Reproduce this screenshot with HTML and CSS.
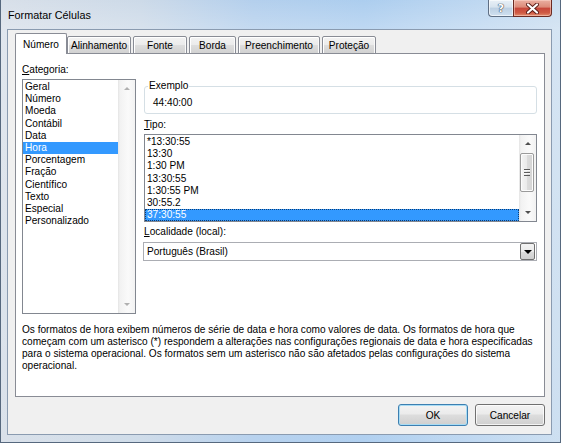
FILE: index.html
```html
<!DOCTYPE html>
<html lang="pt-BR">
<head>
<meta charset="utf-8">
<title>Formatar Células</title>
<link rel="stylesheet" href="styles.css">
</head>
<body>
<div class="window">
  <div class="titlebar">
    <span class="title">Formatar Células</span>
    <div class="caption-buttons">
      <span class="cap-btn cap-help">?</span>
      <span class="cap-btn cap-close">
        <svg width="13" height="11" viewBox="0 0 13 11"><path d="M2 1.5 L11 9.5 M11 1.5 L2 9.5" stroke="#5a1c16" stroke-width="4" stroke-linecap="round"/><path d="M2 1.5 L11 9.5 M11 1.5 L2 9.5" stroke="#ffffff" stroke-width="2.2" stroke-linecap="round"/></svg>
      </span>
    </div>
  </div>
  <div class="client">
    <div class="tabs">
      <span class="tab tab-active tab-numero">Número</span>
      <span class="tab tab-alinhamento">Alinhamento</span>
      <span class="tab tab-fonte">Fonte</span>
      <span class="tab tab-borda">Borda</span>
      <span class="tab tab-preenchimento">Preenchimento</span>
      <span class="tab tab-protecao">Proteção</span>
    </div>
    <div class="panel">
      <div class="cols">
        <div class="col-left">
          <div class="label"><u>C</u>ategoria:</div>
          <div class="listbox cat-list">
            <ul class="items">
              <li>Geral</li>
              <li>Número</li>
              <li>Moeda</li>
              <li>Contábil</li>
              <li>Data</li>
              <li class="selected">Hora</li>
              <li>Porcentagem</li>
              <li>Fração</li>
              <li>Científico</li>
              <li>Texto</li>
              <li>Especial</li>
              <li>Personalizado</li>
            </ul>
            <div class="scrollbar sb-disabled">
              <span class="sb-arrow sb-up"></span>
              <span class="sb-track"></span>
              <span class="sb-arrow sb-down"></span>
            </div>
          </div>
        </div>
        <div class="col-right">
          <fieldset class="group">
            <legend>Exemplo</legend>
            <div class="sample">44:40:00</div>
          </fieldset>
          <div class="label label-tipo"><u>T</u>ipo:</div>
          <div class="listbox type-list">
            <ul class="items">
              <li>*13:30:55</li>
              <li>13:30</li>
              <li>1:30 PM</li>
              <li>13:30:55</li>
              <li>1:30:55 PM</li>
              <li>30:55.2</li>
              <li class="selected focused">37:30:55</li>
            </ul>
            <div class="scrollbar">
              <span class="sb-arrow sb-up"></span>
              <span class="sb-thumb"><span class="sb-grip"></span></span>
              <span class="sb-track"></span>
              <span class="sb-arrow sb-down"></span>
            </div>
          </div>
          <div class="label label-local"><u>L</u>ocalidade (local):</div>
          <div class="combo">
            <span class="combo-text">Português (Brasil)</span>
            <span class="combo-btn"></span>
          </div>
        </div>
      </div>
      <p class="desc">Os formatos de hora exibem números de série de data e hora como valores de data. Os formatos de hora que<br>começam com um asterisco (*) respondem a alterações nas configurações regionais de data e hora especificadas<br>para o sistema operacional. Os formatos sem um asterisco não são afetados pelas configurações do sistema<br>operacional.</p>
    </div>
    <div class="buttons">
      <button class="btn btn-default">OK</button>
      <button class="btn">Cancelar</button>
    </div>
  </div>
</div>
</body>
</html>
```

FILE: styles.css
```css
* { box-sizing: border-box; }
html, body { margin: 0; padding: 0; }
body {
  width: 561px;
  height: 443px;
  overflow: hidden;
  background: #fff;
  font-family: "Liberation Sans", "Open Sans", sans-serif;
  font-size: 10.1px;
  color: #000;
}

.window {
  width: 561px;
  height: 443px;
  display: flex;
  flex-direction: column;
  padding: 0 8px 7px 6px;
  border: 1px solid #56687e;
  border-top: none;
  background:
    linear-gradient(to bottom, rgba(255,255,255,0.05), rgba(255,255,255,0.25) 28px, rgba(255,255,255,0.1)),
    linear-gradient(to right, #d6dee8 0%, #cad8e7 25%, #b0cdec 45%, #a8cbee 65%, #bad5f0 85%, #c8dcef 100%);
}

.titlebar {
  height: 29px;
  flex: none;
  display: flex;
  align-items: flex-start;
}
.title {
  padding: 8px 0 0 1px;
  font-size: 10.8px;
  line-height: 14px;
  color: #000;
}
.caption-buttons {
  margin-left: auto;
  display: flex;
}
.cap-btn {
  height: 17px;
  display: flex;
  align-items: center;
  justify-content: center;
  border: 1px solid #5f6f84;
  border-top: none;
}
.cap-help {
  width: 25px;
  border-right: none;
  border-radius: 0 0 0 4px;
  background: linear-gradient(#e9f0f7, #d7e3ee 45%, #bccfe2 50%, #cfe0f0);
  box-shadow: inset 0 0 0 1px rgba(255,255,255,0.6);
  color: #fff;
  font-family: "DejaVu Sans", sans-serif;
  font-weight: bold;
  font-size: 11px;
  text-shadow: 0 0 1px #3d4a5a, 0 0 1px #3d4a5a, 0 0 1px #3d4a5a;
}
.cap-close {
  width: 39px;
  border-color: #6b2a22;
  border-radius: 0 0 4px 0;
  background: linear-gradient(#eab0a2, #dc8a78 45%, #c7473a 50%, #cf5a44 80%, #e38e6e);
  box-shadow: inset 0 0 0 1px rgba(255,220,210,0.5);
}

.client {
  flex: 1;
  display: flex;
  flex-direction: column;
  border: 1px solid #8a9bb0;
  background: #f0f0f0;
  padding: 3px 6px 8px 7px;
}

.tabs {
  display: flex;
  align-items: flex-end;
  height: 21px;
  margin-bottom: -1px;
  position: relative;
  z-index: 1;
}
.tab {
  height: 18px;
  display: flex;
  align-items: center;
  justify-content: center;
  padding-top: 1px;
  margin-left: 2px;
  border: 1px solid #898c95;
  border-radius: 2px 2px 0 0;
  background: linear-gradient(#f3f3f3, #ebebeb 50%, #dedede 50%, #d2d2d2);
  box-shadow: inset 1px 1px 0 #fff, inset -1px 0 0 #fafafa;
  white-space: nowrap;
}
.tab-active {
  height: 21px;
  margin-left: 0;
  padding-top: 0;
  border-bottom: none;
  background: #fff;
  box-shadow: none;
}
.tab-numero { width: 52px; }
.tab-alinhamento { width: 64px; margin-left: 0; }
.tab-fonte { width: 54px; }
.tab-borda { width: 47px; }
.tab-preenchimento { width: 82px; }
.tab-protecao { width: 54px; }

.panel {
  height: 344px;
  flex: none;
  display: flex;
  flex-direction: column;
  border: 1px solid #898c95;
  background: #fff;
  padding: 10px 7px 0 6px;
}
.cols {
  display: grid;
  grid-template-columns: 114px 1fr;
  column-gap: 8px;
}
.col-right {
  display: flex;
  flex-direction: column;
}
.label {
  line-height: 12px;
  height: 12px;
  white-space: nowrap;
}

.listbox {
  display: flex;
  border: 1px solid #828790;
  background: #fff;
}
.cat-list {
  height: 235px;
  margin-top: 3px;
}
.type-list {
  height: 88px;
  margin-top: 3px;
}
.items {
  list-style: none;
  margin: 0;
  padding: 1px 0 0;
  flex: 1;
  min-width: 0;
}
.items li {
  height: 12.2px;
  line-height: 12.2px;
  padding-left: 2px;
  white-space: nowrap;
}
.items li.selected {
  background: #3399ff;
  color: #fff;
}
.items li.focused {
  outline: 1px dotted #0b3d74;
  outline-offset: -1px;
}

.scrollbar {
  width: 17px;
  flex: none;
  display: flex;
  flex-direction: column;
  background: linear-gradient(to right, #e4e4e4, #f2f2f2 2px, #fafafa 60%, #f2f2f2);
}
.sb-arrow {
  height: 17px;
  flex: none;
  display: flex;
  align-items: center;
  justify-content: center;
}
.sb-arrow::before {
  content: "";
  border-left: 3px solid transparent;
  border-right: 3px solid transparent;
}
.sb-up::before { border-bottom: 3px solid #4f4f4f; }
.sb-down::before { border-top: 3px solid #4f4f4f; }
.sb-disabled .sb-up::before { border-bottom-color: #b0b0b0; }
.sb-disabled .sb-down::before { border-top-color: #b0b0b0; }
.sb-track { flex: 1; }
.sb-thumb {
  height: 39px;
  margin: 1px 2px 0 1px;
  flex: none;
  display: flex;
  align-items: center;
  justify-content: center;
  border: 1px solid #9b9b9b;
  border-radius: 2px;
  background: linear-gradient(to right, #f4f4f4, #eaeaea 50%, #dcdcdc 50%, #d4d4d4);
  box-shadow: inset 0 0 0 1px #fcfcfc;
}
.sb-grip {
  width: 6px;
  height: 7px;
  background: repeating-linear-gradient(to bottom, #5a5a5a 0 1px, #f8f8f8 1px 2px, transparent 2px 3px);
}

.group {
  margin: 16px 0 0;
  padding: 0 0 4px 3px;
  border: 1px solid #d5dfe5;
  border-radius: 3px;
  min-width: 0;
}
.group legend {
  padding: 0 1px;
  line-height: 12px;
}
.sample {
  margin-top: 5px;
  padding-left: 5px;
  line-height: 12px;
}
.label-tipo { margin-top: 5px; }
.label-local { margin-top: 4px; }

.combo {
  height: 19px;
  margin-top: 4px;
  margin-left: -1px;
  display: flex;
  align-items: center;
  border: 1px solid #abadb3;
  background: #fff;
}
.combo-text {
  flex: 1;
  padding-left: 3px;
  line-height: 12px;
}
.combo-btn {
  width: 15px;
  height: 17px;
  margin-right: 1px;
  display: flex;
  align-items: center;
  justify-content: center;
  border: 1px solid #707070;
  border-radius: 2px;
  background: linear-gradient(#f3f3f3, #ebebeb 50%, #dddddd 50%, #cfcfcf);
}
.combo-btn::before {
  content: "";
  border-left: 4px solid transparent;
  border-right: 4px solid transparent;
  border-top: 4px solid #000;
}

.desc {
  margin: 10px 0 0;
  line-height: 12px;
  white-space: nowrap;
}

.buttons {
  display: flex;
  justify-content: flex-end;
  gap: 7px;
  margin-top: 7px;
}
.btn {
  width: 70px;
  height: 22px;
  padding: 0;
  border: 1px solid #707070;
  border-radius: 3px;
  background: linear-gradient(#f3f3f3, #ebebeb 45%, #dddddd 50%, #cfcfcf);
  box-shadow: inset 0 0 0 1px rgba(255,255,255,0.75);
  font: inherit;
  color: #000;
}
.btn-default {
  border-color: #3c7fb1;
  box-shadow: inset 0 0 0 1px #a8dcf4;
}
```
